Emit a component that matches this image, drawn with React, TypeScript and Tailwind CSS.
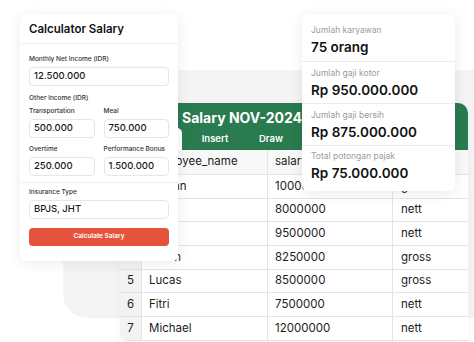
import React from "react"

const rows = [
  { no: 1, name: "Farhan", salary: "10000000", type: "gross" },
  { no: 2, name: "Sinta", salary: "8000000", type: "nett" },
  { no: 3, name: "Budi", salary: "9500000", type: "nett" },
  { no: 4, name: "Anton", salary: "8250000", type: "gross" },
  { no: 5, name: "Lucas", salary: "8500000", type: "gross" },
  { no: 6, name: "Fitri", salary: "7500000", type: "nett" },
  { no: 7, name: "Michael", salary: "12000000", type: "nett" },
]

const stats = [
  { label: "Jumlah karyawan", value: "75 orang" },
  { label: "Jumlah gaji kotor", value: "Rp 950.000.000" },
  { label: "Jumlah gaji bersih", value: "Rp 875.000.000" },
  { label: "Total potongan pajak", value: "Rp 75.000.000" },
]

function Field({ label, value }: { label: string; value: string }) {
  return (
    <div className="flex flex-col">
      <span className="h-[13px] text-[6.5px] font-medium leading-[13px] text-[#333]">{label}</span>
      <div className="mt-[1px] flex h-[19px] items-center rounded-[4px] border border-[#e6e6e6] px-[4px] text-[9.5px] font-medium text-[#1a1a1a]">
        {value}
      </div>
    </div>
  )
}

function Calculator() {
  return (
    <div className="absolute left-[20px] top-[14px] w-[158px] rounded-[6px] bg-white shadow-[0_2px_14px_rgba(0,0,0,0.08)]">
      <div className="flex h-[29px] items-center px-[9px] pt-[3px] text-[11.5px] font-semibold text-[#111]">Calculator Salary</div>
      <div className="border-b border-[#efefef]" />
      <div className="px-[9px] pt-[9px]">
        <Field label="Monthly Net Income (IDR)" value="12.500.000" />
        <div className="mt-[6px] h-[13px] text-[6.5px] font-medium leading-[13px] text-[#333]">Other Income (IDR)</div>
        <div className="grid grid-cols-2 gap-x-[9px] gap-y-[5px]">
          <Field label="Transportation" value="500.000" />
          <Field label="Meal" value="750.000" />
          <Field label="Overtime" value="250.000" />
          <Field label="Performance Bonus" value="1.500.000" />
        </div>
      </div>
      <div className="mt-[6px] border-b border-[#efefef]" />
      <div className="px-[9px] pt-[3px] pb-[15px]">
        <Field label="Insurance Type" value="BPJS, JHT" />
        <button className="mt-[9px] flex h-[18px] w-full items-center justify-center rounded-[4px] bg-[#e5533d] text-[6.5px] font-semibold text-white">
          Calculate Salary
        </button>
      </div>
    </div>
  )
}

function Stats() {
  return (
    <div className="absolute left-[302px] top-[14px] w-[153px] rounded-[6px] bg-white py-[6px] shadow-[0_2px_14px_rgba(0,0,0,0.09)]">
      {stats.map((s, i) => (
        <div
          key={s.label}
          className={`flex flex-col px-[9px] ${i < stats.length - 1 ? "border-b border-[#ececec]" : ""} ${i === 0 ? "pt-[2px] pb-[5px]" : i === 3 ? "pt-[2px] pb-[3px]" : "pt-[3px] pb-[4px]"}`}
        >
          <span className="h-[16px] text-[8.5px] leading-[16px] text-[#9a9a9a]">{s.label}</span>
          <span className="h-[18px] text-[13.5px] font-semibold leading-[18px] text-[#111]">{s.value}</span>
        </div>
      ))}
    </div>
  )
}

function Sheet() {
  return (
    <div className="absolute left-[120px] top-[103px] w-[348px] overflow-hidden rounded-tr-[10px] rounded-bl-[8px] bg-white shadow-[0_2px_10px_rgba(0,0,0,0.05)]">
      <div className="flex h-[47px] flex-col bg-[#2a7b4f]">
        <div className="flex h-[23px] items-end pl-[62px] text-[14px] font-bold leading-none text-white">
          <span className="pb-[1px]">Salary NOV-2024</span>
        </div>
        <div className="mt-auto flex h-[22px] items-end pl-[16px]">
          <div className="flex h-[22px] w-[46px] items-center justify-center rounded-t-[5px] bg-white text-[9.5px] font-semibold text-[#2a7b4f]">
            Home
          </div>
          <div className="flex h-[22px] w-[66px] items-center justify-center text-[9.5px] font-semibold text-white">Insert</div>
          <div className="flex h-[22px] w-[46px] items-center justify-center text-[9.5px] font-semibold text-white">Draw</div>
        </div>
      </div>
      <div className="grid grid-cols-[22px_126px_125px_75px] text-[11.5px] text-[#1c1c1c]">
        <div className="flex h-[25px] items-center justify-center border-b border-r border-[#e4e4e4] bg-[#f1f1f1]" />
        <div className="flex h-[25px] items-center border-b border-r border-[#e4e4e4] bg-[#f8f8f8] px-[7px]">employee_name</div>
        <div className="flex h-[25px] items-center border-b border-r border-[#e4e4e4] bg-[#f8f8f8] px-[7px]">salary</div>
        <div className="flex h-[25px] items-center border-b border-[#e4e4e4] bg-[#f8f8f8] px-[7px]">type</div>
        {rows.map((r) => (
          <React.Fragment key={r.no}>
            <div className="flex h-[23.7px] items-center justify-center border-b border-r border-[#e4e4e4] bg-[#f3f3f3]">{r.no}</div>
            <div className="flex h-[23.7px] items-center border-b border-r border-[#e4e4e4] px-[7px]">{r.name}</div>
            <div className="flex h-[23.7px] items-center border-b border-r border-[#e4e4e4] px-[7px]">{r.salary}</div>
            <div className="flex h-[23.7px] items-center border-b border-[#e4e4e4] px-[8px]">{r.type}</div>
          </React.Fragment>
        ))}
      </div>
    </div>
  )
}

export default function App() {
  return (
    <div className="relative h-[342px] w-[474px] overflow-hidden bg-white font-['Inter',sans-serif]">
      <div className="absolute left-[63px] right-0 top-[70px] h-[248px] rounded-l-[24px] bg-[#f4f4f4]" />
      <Sheet />
      <Calculator />
      <Stats />
    </div>
  )
}
